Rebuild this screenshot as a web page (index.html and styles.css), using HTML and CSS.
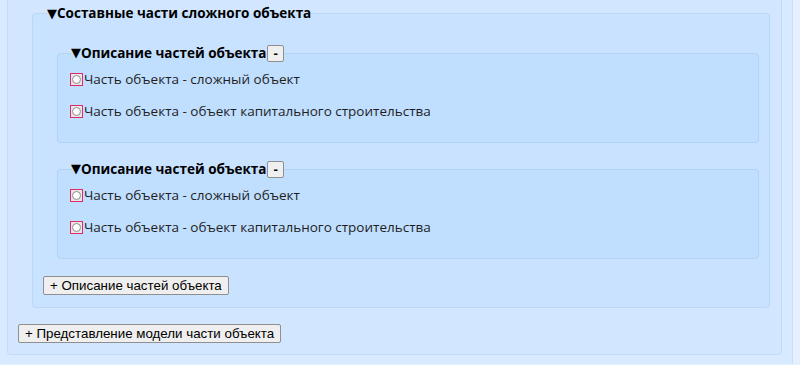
FILE: index.html
```html
<!DOCTYPE html>
<html>
<head>
<meta charset="utf-8">
<link rel="stylesheet" href="styles.css">
</head>
<body>
<div class="page">
  <div class="panel">
    <fieldset class="group">
      <legend class="group__title"><span class="arrow">▼</span>Составные части сложного объекта</legend>

      <fieldset class="part">
        <legend class="part__title"><span class="arrow">▼</span>Описание частей объекта<button class="btn btn--small">-</button></legend>
        <div class="option"><span class="mark"><span class="mark__dot"></span></span>Часть объекта - сложный объект</div>
        <div class="option"><span class="mark"><span class="mark__dot"></span></span>Часть объекта - объект капитального строительства</div>
      </fieldset>

      <fieldset class="part">
        <legend class="part__title"><span class="arrow">▼</span>Описание частей объекта<button class="btn btn--small">-</button></legend>
        <div class="option"><span class="mark"><span class="mark__dot"></span></span>Часть объекта - сложный объект</div>
        <div class="option"><span class="mark"><span class="mark__dot"></span></span>Часть объекта - объект капитального строительства</div>
      </fieldset>

      <button class="btn btn--add">+ Описание частей объекта</button>
    </fieldset>

    <button class="btn btn--add btn--outer">+ Представление модели части объекта</button>
  </div>
</div>
</body>
</html>
```

FILE: styles.css
```css
*{
  box-sizing: border-box;
}
body{
  margin: 0;
  background: #e4f0fe;
  font-family: "Open Sans", sans-serif;
  font-size: 13.5px;
  color: #1e1e1e;
}

/* the outer wrapper that is cut off at the top */
.page{
  width: 793px;
  height: 365px;
  background: #d8eaff;
  border-right: 1px solid #c9dff7;
  padding-left: 7px;
}

.panel{
  width: 775px;
  height: 356px;
  margin-top: -1px;
  background: #d2e7ff;
  border: 1px solid #c2dbf6;
  border-top: none;
  border-radius: 0 0 4px 4px;
  padding: 1px 10px 0 10px;
}

/* fieldsets */
.group{
  margin: 4px 1px 0 14px;
  padding: 4px 10px 12px 10px;
  background: #c8e2ff;
  border: 1px solid #b9d8f8;
  border-radius: 4px;
}
.group__title{
  padding: 0;
  margin-left: 4px;
  font-weight: bold;
  color: #000;
  line-height: 18px;
}

.arrow{
  font-family: "DejaVu Sans", sans-serif;
  font-size: 13px;
}

.part{
  margin: 17px 0 17px 14px;
  padding: 0 10px 8px 12px;
  background: #c0dfff;
  border: 1px solid #b3d3f5;
  border-radius: 4px;
}
.part__title{
  padding: 0;
  margin-left: 1px;
  font-weight: bold;
  color: #000;
  line-height: 18px;
  display: flex;
  align-items: center;
}

.option{
  display: flex;
  align-items: center;
  height: 18px;
  margin-bottom: 14px;
}
.option:first-of-type{
  margin-top: 8px;
}

/* the radio mark with the red invalid outline */
.mark{
  width: 13px;
  height: 13px;
  border: 1px solid #e0286a;
  display: flex;
  align-items: center;
  justify-content: center;
  margin-right: 1px;
  background: #e8e8e8;
}
.mark__dot{
  width: 9px;
  height: 9px;
  border-radius: 50%;
  border: 1px solid #8c8c8c;
  background: #fff;
}

/* buttons */
.btn{
  font-family: "Liberation Sans", Arial, sans-serif;
  font-size: 13.33px;
  color: #000;
  background: #efefef;
  border: 1px solid #8f8f8f;
  border-radius: 2px;
  padding: 1px 6px;
  line-height: 15px;
}
.btn--small{
  font-weight: bold;
  padding: 0 5px;
  height: 17px;
  margin-left: 1px;
}
.btn--add{
  display: block;
  height: 19px;
  margin-top: 2px;
}
.btn--outer{
  margin-top: 16px;
}
```
